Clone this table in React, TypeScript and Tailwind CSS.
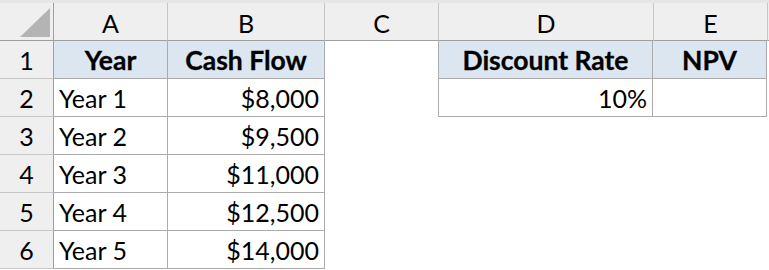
import React from "react";

const cols = [
  { key: "A", w: "w-[114px]" },
  { key: "B", w: "w-[157px]" },
  { key: "C", w: "w-[114px]" },
  { key: "D", w: "w-[215px]" },
  { key: "E", w: "w-[114px]" },
];

type Cell = { text?: string; align?: "left" | "right" | "center"; head?: boolean; boxed?: boolean };

const rows: Cell[][] = [
  [
    { text: "Year", align: "center", head: true, boxed: true },
    { text: "Cash Flow", align: "center", head: true, boxed: true },
    {},
    { text: "Discount Rate", align: "center", head: true, boxed: true },
    { text: "NPV", align: "center", head: true, boxed: true },
  ],
  [
    { text: "Year 1", align: "left", boxed: true },
    { text: "$8,000", align: "right", boxed: true },
    {},
    { text: "10%", align: "right", boxed: true },
    { text: "", boxed: true },
  ],
  [{ text: "Year 2", align: "left", boxed: true }, { text: "$9,500", align: "right", boxed: true }, {}, {}, {}],
  [{ text: "Year 3", align: "left", boxed: true }, { text: "$11,000", align: "right", boxed: true }, {}, {}, {}],
  [{ text: "Year 4", align: "left", boxed: true }, { text: "$12,500", align: "right", boxed: true }, {}, {}, {}],
  [{ text: "Year 5", align: "left", boxed: true }, { text: "$14,000", align: "right", boxed: true }, {}, {}, {}],
];

export default function App() {
  return (
    <div className="w-[769px] h-[270px] overflow-hidden bg-white text-black font-['Lato',sans-serif] text-[25px]">
      <div className="h-[3px] bg-[#e6e6e6]" />
      {/* column headers */}
      <div className="flex h-[38px]">
        <div className="w-[54px] shrink-0 bg-[#efefef] border-r border-b border-[#9f9f9f] flex items-end justify-end pr-[3px] pb-[3px]">
          <svg width="30" height="29" viewBox="0 0 30 29">
            <polygon points="0,29 30,29 30,0" fill="#b4b4b4" />
          </svg>
        </div>
        {cols.map((c) => (
          <div
            key={c.key}
            className={`${c.w} shrink-0 bg-[#efefef] border-r border-b border-r-[#c6c6c6] border-b-[#9f9f9f] flex items-center justify-center pt-[4px]`}
          >
            {c.key}
          </div>
        ))}
        <div className="flex-1 bg-[#efefef] border-b border-[#9f9f9f]" />
      </div>
      {rows.map((r, i) => (
        <div key={i} className="flex h-[38px]">
          <div className="w-[54px] shrink-0 bg-[#efefef] border-r border-r-[#9f9f9f] border-b border-b-[#c6c6c6] flex items-center justify-center pt-[2px]">
            {i + 1}
          </div>
          {r.map((cell, j) => {
            const boxed = cell.boxed;
            const leftEdge = boxed && j > 0 && !r[j - 1].boxed;
            return (
              <div
                key={j}
                className={`${cols[j].w} shrink-0 flex items-center pt-[2px] whitespace-nowrap ${
                  boxed ? "border-r border-b border-[#ababab]" : ""
                } ${leftEdge ? "border-l -ml-px" : ""} ${
                  cell.head ? "bg-[#dce6f1] font-bold text-[26.5px] [-webkit-text-stroke:0.3px_black]" : ""
                } ${
                  cell.align === "right" ? "justify-end pr-[5px]" : cell.align === "center" ? "justify-center" : "justify-start pl-[5px]"
                }`}
              >
                {cell.text}
              </div>
            );
          })}
        </div>
      ))}
    </div>
  );
}
